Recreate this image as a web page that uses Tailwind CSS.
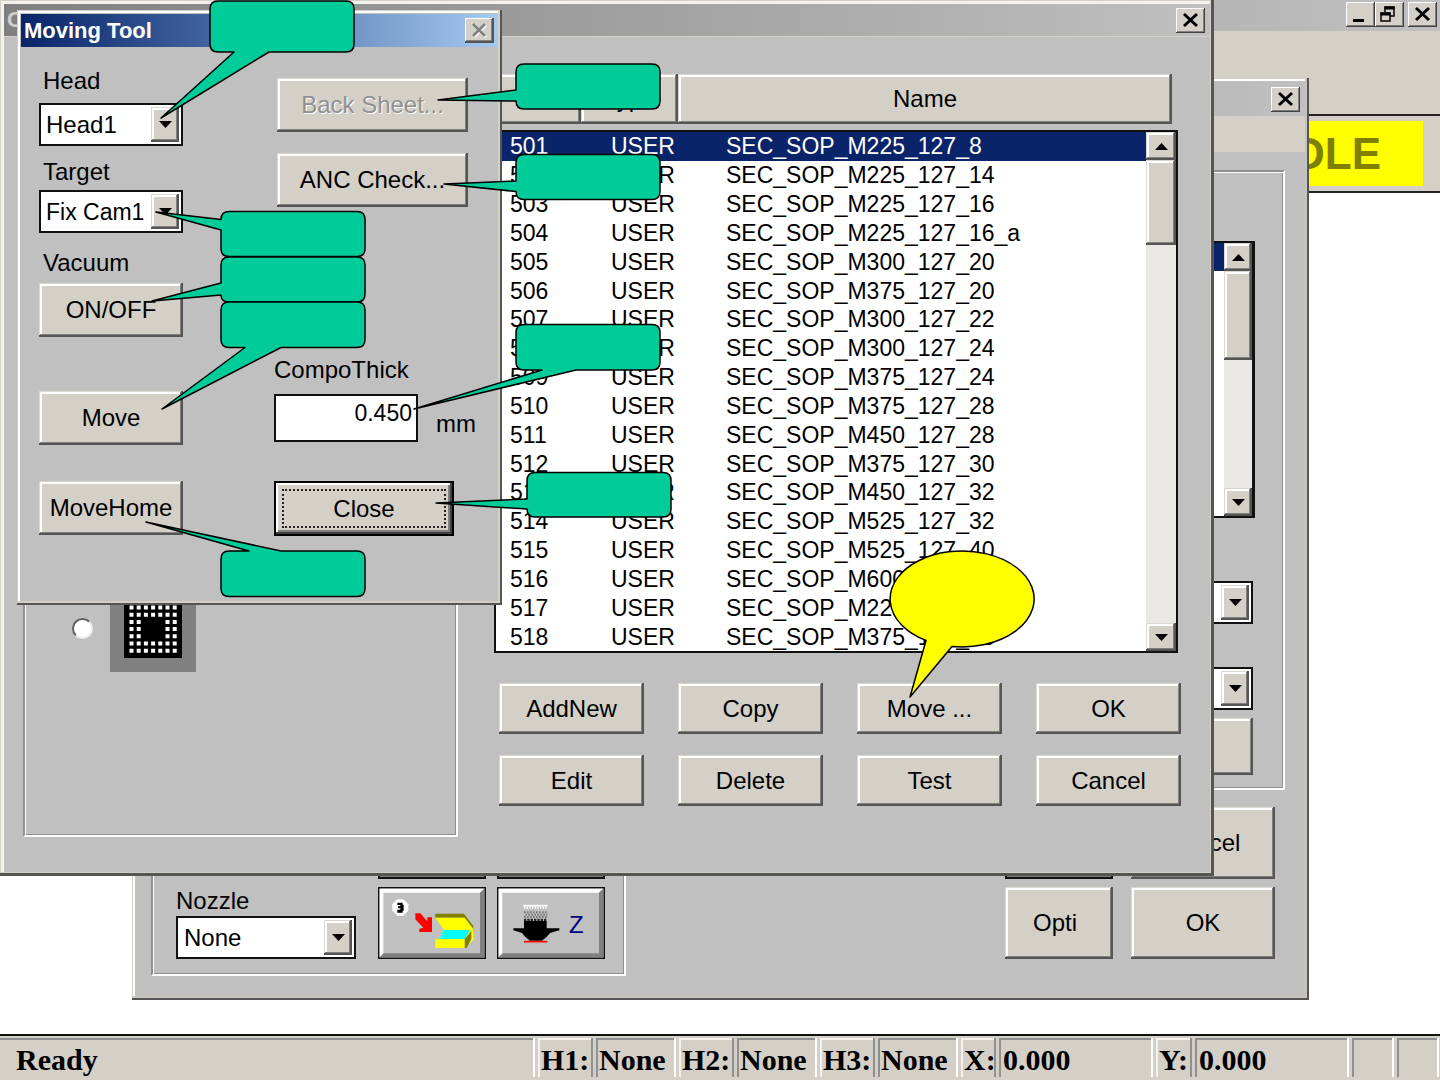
<!DOCTYPE html>
<html lang="en">
<head>
  <meta charset="UTF-8" />
  <meta name="viewport" content="width=device-width, initial-scale=1.0"/>
  <title>Moving Tool</title>
  <script src="https://cdn.jsdelivr.net/npm/@tailwindcss/browser@4"></script>
</head>
<body class="relative min-h-screen flex flex-col overflow-hidden bg-white text-black text-[24px] leading-9 font-['Liberation_Sans',sans-serif]">

<!-- Main application frame -->
<header>
  <div class="h-[31px] pt-[2px] pr-[3px] flex justify-end bg-linear-to-r from-[#808080] to-[#c0c0c0]">
    <button aria-label="Minimize" class="w-[29px] h-[25px] bg-[#d4d0c8] shadow-[inset_-1px_-1px_#404040,inset_1px_1px_#fff,inset_-2px_-2px_#808080]">
      <svg viewBox="0 0 29 25" class="w-full h-full"><rect x="7" y="17" width="11" height="3"/></svg>
    </button>
    <button aria-label="Restore" class="w-[29px] h-[25px] bg-[#d4d0c8] shadow-[inset_-1px_-1px_#404040,inset_1px_1px_#fff,inset_-2px_-2px_#808080]">
      <svg viewBox="0 0 29 25" class="w-full h-full" fill="none" stroke="#000" stroke-width="1.5"><path d="M10 10V5h9v9h-4M6 11h9v8H6z"/><path d="M9.500 6h10M5.500 12h10" stroke-width="3"/></svg>
    </button>
    <button aria-label="Close" class="ml-1 w-[29px] h-[25px] bg-[#d4d0c8] shadow-[inset_-1px_-1px_#404040,inset_1px_1px_#fff,inset_-2px_-2px_#808080]">
      <svg viewBox="0 0 29 25" class="w-full h-full" stroke="#000" stroke-width="3"><path d="M8 6l13 12M21 6L8 18"/></svg>
    </button>
  </div>
  <div class="h-[83px] bg-[#d4d0c8]"></div>
  <div class="h-[79px] py-[5px] pr-[17px] flex justify-end border-y-2 border-[#222] bg-[#d4d0c8]">
    <div class="w-[180px] pr-[42px] flex items-center justify-end bg-[#ffff00] text-[#808000] text-[44px] font-bold">IDLE</div>
  </div>
</header>

<main class="grow">

  <!-- Package window, furthest back -->
  <section class="absolute left-[132px] top-[78px] w-[1177px] h-[922px] p-1 flex flex-col bg-[#c0c0c0] shadow-[inset_-2px_-2px_#555,inset_1px_1px_#d4d0c8,inset_-4px_-4px_#c8c4bc,inset_3px_3px_#fff]">
    <div class="h-[34px] px-[5px] flex items-center justify-end bg-linear-to-r from-[#808080] to-[#c0c0c0]">
      <button aria-label="Close" class="w-[29px] h-[25px] bg-[#d4d0c8] shadow-[inset_-1px_-1px_#404040,inset_1px_1px_#fff,inset_-2px_-2px_#808080]">
        <svg viewBox="0 0 29 25" class="w-full h-full" stroke="#000" stroke-width="3"><path d="M8 6l13 12M21 6L8 18"/></svg>
      </button>
    </div>
    <div class="h-9 bg-[#d4d0c8]"></div>
    <div class="grow flex justify-between pl-[15px] pr-5">
      <fieldset class="self-end mb-5 w-[475px] p-[15px] pl-[23px] pr-[19px] flex items-end gap-[11px] border-2 border-[#909090] border-b-white border-r-white shadow-[inset_1px_1px_#fff,inset_-1px_-1px_#909090]">
        <div class="w-[180px] mr-[11px]">
          <label for="nozzle" class="block leading-[30px]">Nozzle</label>
          <div class="relative">
            <select id="nozzle" class="block appearance-none w-full h-[43px] pl-[6px] bg-white border-2 border-[#111]"><option>None</option></select>
            <span class="absolute right-1 inset-y-1 w-7 flex items-center justify-center pointer-events-none bg-[#d4d0c8] shadow-[inset_-2px_-2px_#555,inset_1px_1px_#dcd8d0,inset_-3px_-3px_#808080,inset_3px_3px_#fff]"><svg viewBox="0 0 13 7" class="w-[13px]"><path d="M0 0h13L6.500 7z"/></svg></span>
          </div>
        </div>
        <div class="grid grid-cols-2 gap-x-[11px] gap-y-2">
          <button aria-label="Tool one" class="w-[108px] h-[72px] border-2 border-[#111] shadow-[inset_-5px_-5px_#808080,inset_3px_3px_#fff]"></button>
          <button aria-label="Tool two" class="w-[108px] h-[72px] border-2 border-[#111] shadow-[inset_-5px_-5px_#808080,inset_3px_3px_#fff]"></button>
          <button aria-label="Send to feeder" class="w-[108px] h-[72px]">
            <svg viewBox="24 51 324 216" class="w-full h-full">
              <path d="M26 53h320v212H26z" fill="#c0c0c0" stroke="#111" stroke-width="5"/>
              <path d="M29 56h314l-14 12H40v182l-11 12z" fill="#fff"/>
              <path d="M343 56v206H29l12-12h289V68z" fill="#808080"/>
              <path d="M82 88h18l15 15v19l-15 15H82l-15-15v-19z" fill="#fff"/>
              <path d="M82 98h16v6h3v18h-3v6H82v-9h9v-4h-7v-6h7v-4h-9z"/>
              <path d="M136 130h15l21 24v-12h14v44h-38v-10l12-3-24-25z" fill="#f00"/>
              <path d="M196 131h86l28 37v14l-28-39h-86z" fill="#808000"/>
              <path d="M196 143h88l26 34v33l-26 24h-88v-27h12l14-27z" fill="#ff0"/>
              <path d="M222 180h78l-16 27h-76z" fill="#0ff"/>
              <path d="M284 207l20-24v24l-14 27h-6z" fill="#808000"/>
            </svg>
          </button>
          <button aria-label="Nozzle Z" class="w-[108px] h-[72px]">
            <svg viewBox="381 51 324 216" class="w-full h-full">
              <path d="M383 53h320v212H383z" fill="#c0c0c0" stroke="#111" stroke-width="5"/>
              <path d="M386 56h314l-14 12H397v182l-11 12z" fill="#fff"/>
              <path d="M700 56v206H386l12-12h289V68z" fill="#808080"/>
              <path d="M460 107h73" stroke="#fff" stroke-width="5"/>
              <path d="M462 113h70" stroke="#fff" stroke-width="7" stroke-dasharray="4 4"/>
              <path d="M462 127h70M466 134h66M462 141h70" stroke="#777" stroke-width="6" stroke-dasharray="5 4"/>
              <path d="M462 150h70" stroke="#222" stroke-width="8" stroke-dasharray="7 3"/>
              <path d="M462 153h68v22h38v6l-28 8-10 12-14 11h-36l-14-11-10-12-26-8v-6h32z"/>
              <path d="M462 215h70" stroke="#f00" stroke-width="5"/>
              <text x="597" y="190" font-size="72" fill="#000080">Z</text>
            </svg>
          </button>
        </div>
      </fieldset>

      <div class="w-[560px] pt-[18px] pb-[37px] flex flex-col">
        <fieldset class="h-[620px] pt-[69px] pr-[30px] flex flex-col items-end border-2 border-[#909090] border-b-white border-r-white shadow-[inset_1px_1px_#fff,inset_-1px_-1px_#909090]">
          <div class="-mr-[2px] w-[300px] h-[277px] flex justify-end bg-white border-2 border-r-[3px] border-[#111]">
            <div class="grow h-7 bg-[#0a246a]"></div>
            <div class="w-7 flex flex-col bg-[#eae8e4]">
              <button aria-label="Scroll up" class="h-7 flex items-center justify-center bg-[#d4d0c8] shadow-[inset_-2px_-2px_#555,inset_1px_1px_#dcd8d0,inset_-3px_-3px_#808080,inset_3px_3px_#fff]"><svg viewBox="0 0 13 7" class="w-[13px]"><path d="M0 7h13L6.500 0z"/></svg></button>
              <div class="h-[89px] bg-[#d4d0c8] shadow-[inset_-2px_-2px_#555,inset_1px_1px_#dcd8d0,inset_-3px_-3px_#808080,inset_3px_3px_#fff]"></div>
              <button aria-label="Scroll down" class="mt-auto h-7 flex items-center justify-center bg-[#d4d0c8] shadow-[inset_-2px_-2px_#555,inset_1px_1px_#dcd8d0,inset_-3px_-3px_#808080,inset_3px_3px_#fff]"><svg viewBox="0 0 13 7" class="w-[13px]"><path d="M0 0h13L6.500 7z"/></svg></button>
            </div>
          </div>
          <div class="relative mt-[63px] w-[180px]">
            <select aria-label="Feeder" class="block appearance-none w-full h-[43px] bg-white border-2 border-[#111]"></select>
            <span class="absolute right-1 inset-y-1 w-7 flex items-center justify-center pointer-events-none bg-[#d4d0c8] shadow-[inset_-2px_-2px_#555,inset_1px_1px_#dcd8d0,inset_-3px_-3px_#808080,inset_3px_3px_#fff]"><svg viewBox="0 0 13 7" class="w-[13px]"><path d="M0 0h13L6.500 7z"/></svg></span>
          </div>
          <div class="relative mt-[43px] w-[180px]">
            <select aria-label="Camera" class="block appearance-none w-full h-[43px] bg-white border-2 border-[#111]"></select>
            <span class="absolute right-1 inset-y-1 w-7 flex items-center justify-center pointer-events-none bg-[#d4d0c8] shadow-[inset_-2px_-2px_#555,inset_1px_1px_#dcd8d0,inset_-3px_-3px_#808080,inset_3px_3px_#fff]"><svg viewBox="0 0 13 7" class="w-[13px]"><path d="M0 0h13L6.500 7z"/></svg></span>
          </div>
          <button aria-label="Package" class="mt-2 w-[180px] h-[57px] bg-[#d4d0c8] shadow-[inset_-2px_-2px_#555,inset_1px_1px_#dcd8d0,inset_-3px_-3px_#808080,inset_3px_3px_#fff]"></button>
        </fieldset>
        <div class="mt-auto mr-[10px] grid grid-cols-[108px_144px] justify-end gap-x-[18px] gap-y-2">
          <button aria-label="Align" class="h-[72px] border-2 border-[#111] shadow-[inset_-5px_-5px_#808080,inset_3px_3px_#fff]"></button>
          <button class="h-[72px] bg-[#d4d0c8] shadow-[inset_-2px_-2px_#555,inset_1px_1px_#dcd8d0,inset_-3px_-3px_#808080,inset_3px_3px_#fff]">Cancel</button>
          <button class="h-[72px] pr-2 bg-[#d4d0c8] shadow-[inset_-2px_-2px_#555,inset_1px_1px_#dcd8d0,inset_-3px_-3px_#808080,inset_3px_3px_#fff]">Opti</button>
          <button class="h-[72px] bg-[#d4d0c8] shadow-[inset_-2px_-2px_#555,inset_1px_1px_#dcd8d0,inset_-3px_-3px_#808080,inset_3px_3px_#fff]">OK</button>
        </div>
      </div>
    </div>
  </section>

  <!-- Component list window -->
  <section class="absolute left-0 top-0 w-[1214px] h-[876px] p-1 flex flex-col bg-[#c0c0c0] shadow-[inset_-3px_-3px_#555,inset_1px_1px_#d4d0c8,inset_-4px_-4px_#d4d0c8,inset_4px_4px_#f4f2ee]">
    <div class="h-[33px] pl-[3px] pr-[5px] flex items-center justify-between border-b border-[#d4d0c8] bg-linear-to-r from-[#808080] to-[#c0c0c0]">
      <h2 class="text-[22px] font-bold text-[#d4d0c8]">C</h2>
      <button aria-label="Close" class="w-[29px] h-[25px] bg-[#d4d0c8] shadow-[inset_-1px_-1px_#404040,inset_1px_1px_#fff,inset_-2px_-2px_#808080]">
        <svg viewBox="0 0 29 25" class="w-full h-full" stroke="#000" stroke-width="3"><path d="M8 6l13 12M21 6L8 18"/></svg>
      </button>
    </div>
    <div class="grow flex pl-[19px]">
      <fieldset class="mb-[35px] w-[435px] h-[300px] self-end pt-[47px] pl-[47px] flex items-start border-2 border-[#909090] border-b-white border-r-white shadow-[inset_1px_1px_#fff,inset_-1px_-1px_#909090]">
        <input id="bga" type="radio" name="package" class="appearance-none mt-[32px] size-[21px] rounded-full bg-white border-2 border-[#606060] border-r-[#eee] border-b-[#eee]" />
        <label for="bga" aria-label="BGA" class="ml-[17px]">
          <svg viewBox="0 0 86 86" class="size-[86px]">
            <path d="M0 0h86v86H0z" fill="#808080"/>
            <path d="M14 14h58v58H14z"/>
            <g stroke="#fff" stroke-width="4" stroke-dasharray="4 3.200">
              <path d="M19.500 21.500h48M19.500 28.700h48M19.500 57.500h48M19.500 64.700h48M19.500 35.900h12M19.500 43.100h12M19.500 50.300h12M55.500 35.900h12M55.500 43.100h12M55.500 50.300h12"/>
            </g>
          </svg>
        </label>
      </fieldset>
      <div class="ml-9 w-[684px] pt-[37px]">
        <div class="flex h-[50px] pr-[6px]">
          <button class="w-[87px] bg-[#d4d0c8] shadow-[inset_-2px_-2px_#555,inset_1px_1px_#dcd8d0,inset_-3px_-3px_#808080,inset_3px_3px_#fff]">No</button>
          <button class="w-[97px] bg-[#d4d0c8] shadow-[inset_-2px_-2px_#555,inset_1px_1px_#dcd8d0,inset_-3px_-3px_#808080,inset_3px_3px_#fff]">Type</button>
          <button class="grow bg-[#d4d0c8] shadow-[inset_-2px_-2px_#555,inset_1px_1px_#dcd8d0,inset_-3px_-3px_#808080,inset_3px_3px_#fff]">Name</button>
        </div>
        <div class="mt-[6px] h-[523px] flex bg-white border-2 border-[#111]">
          <table class="grow h-full border-collapse text-[23px] leading-7"><tbody id="components"></tbody></table>
          <div class="w-[30px] flex flex-col bg-[#eae8e4]">
            <button aria-label="Scroll up" class="h-7 flex items-center justify-center bg-[#d4d0c8] shadow-[inset_-2px_-2px_#555,inset_1px_1px_#dcd8d0,inset_-3px_-3px_#808080,inset_3px_3px_#fff]"><svg viewBox="0 0 13 7" class="w-[13px]"><path d="M0 7h13L6.500 0z"/></svg></button>
            <div class="h-[85px] bg-[#d4d0c8] shadow-[inset_-2px_-2px_#555,inset_1px_1px_#dcd8d0,inset_-3px_-3px_#808080,inset_3px_3px_#fff]"></div>
            <button aria-label="Scroll down" class="mt-auto h-7 flex items-center justify-center bg-[#d4d0c8] shadow-[inset_-2px_-2px_#555,inset_1px_1px_#dcd8d0,inset_-3px_-3px_#808080,inset_3px_3px_#fff]"><svg viewBox="0 0 13 7" class="w-[13px]"><path d="M0 0h13L6.500 7z"/></svg></button>
          </div>
        </div>
        <div id="actions" class="mt-[30px] ml-[5px] -mr-[3px] grid grid-cols-4 gap-x-[34px] gap-y-[21px]"></div>
      </div>
    </div>
  </section>

  <!-- Moving Tool dialog -->
  <section class="absolute left-[17px] top-[10px] w-[485px] h-[595px] p-1 flex flex-col bg-[#c0c0c0] shadow-[inset_-2px_-2px_#555,inset_1px_1px_#d4d0c8,inset_-4px_-4px_#d4d0c8,inset_3px_3px_#fff]">
    <div class="h-[33px] pl-[3px] pr-1 flex items-center justify-between bg-linear-to-r from-[#0a246a] to-[#a6caf0]">
      <h1 class="text-[22px] font-bold text-white">Moving Tool</h1>
      <button aria-label="Close" class="w-[29px] h-[25px] bg-[#d4d0c8] shadow-[inset_-2px_-2px_#555,inset_1px_1px_#fff,inset_-3px_-3px_#808080]">
        <svg viewBox="0 0 29 25" class="w-full h-full" stroke-width="2.500"><path d="M9 7l12 12M21 7L9 19" stroke="#fff"/><path d="M8 6l12 12M20 6L8 18" stroke="#808080"/></svg>
      </button>
    </div>
    <div class="flex pl-[18px]">
      <div class="w-[144px] pt-4 flex flex-col">
        <label for="head" class="pl-1 mb-1">Head</label>
        <div class="relative">
          <select id="head" class="block appearance-none w-full h-[43px] pl-[5px] bg-white border-2 border-[#111]"><option>Head1</option></select>
          <span class="absolute right-1 inset-y-1 w-7 flex items-center justify-center pointer-events-none bg-[#d4d0c8] shadow-[inset_-2px_-2px_#555,inset_1px_1px_#dcd8d0,inset_-3px_-3px_#808080,inset_3px_3px_#fff]"><svg viewBox="0 0 13 7" class="w-[13px]"><path d="M0 0h13L6.500 7z"/></svg></span>
        </div>
        <label for="target" class="pl-1 mt-2">Target</label>
        <div class="relative">
          <select id="target" class="block appearance-none w-full h-[43px] pl-[5px] text-[23px] bg-white border-2 border-[#111]"><option>Fix Cam1</option></select>
          <span class="absolute right-1 inset-y-1 w-7 flex items-center justify-center pointer-events-none bg-[#d4d0c8] shadow-[inset_-2px_-2px_#555,inset_1px_1px_#dcd8d0,inset_-3px_-3px_#808080,inset_3px_3px_#fff]"><svg viewBox="0 0 13 7" class="w-[13px]"><path d="M0 0h13L6.500 7z"/></svg></span>
        </div>
        <label for="vacuum" class="pl-1 mt-3 mb-[2px]">Vacuum</label>
        <button id="vacuum" class="h-[54px] bg-[#d4d0c8] shadow-[inset_-2px_-2px_#555,inset_1px_1px_#dcd8d0,inset_-3px_-3px_#808080,inset_3px_3px_#fff]">ON/OFF</button>
        <button class="mt-[54px] h-[54px] bg-[#d4d0c8] shadow-[inset_-2px_-2px_#555,inset_1px_1px_#dcd8d0,inset_-3px_-3px_#808080,inset_3px_3px_#fff]">Move</button>
        <button class="mt-9 h-[54px] bg-[#d4d0c8] shadow-[inset_-2px_-2px_#555,inset_1px_1px_#dcd8d0,inset_-3px_-3px_#808080,inset_3px_3px_#fff]">MoveHome</button>
      </div>
      <div class="ml-[91px] pt-[31px] flex flex-col items-start">
        <button disabled class="ml-[3px] w-[191px] h-[54px] text-[#909090] text-shadow-[1px_1px_#fff] bg-[#d4d0c8] shadow-[inset_-2px_-2px_#555,inset_1px_1px_#dcd8d0,inset_-3px_-3px_#808080,inset_3px_3px_#fff]">Back Sheet...</button>
        <button class="ml-[3px] mt-[21px] w-[191px] h-[54px] bg-[#d4d0c8] shadow-[inset_-2px_-2px_#555,inset_1px_1px_#dcd8d0,inset_-3px_-3px_#808080,inset_3px_3px_#fff]">ANC Check...</button>
        <label for="thick" class="mt-[145px] mb-[6px]">CompoThick</label>
        <div class="flex items-end gap-[18px]">
          <input id="thick" type="text" value="0.450" class="w-[144px] h-12 pr-1 pb-[9px] text-right text-[23px] bg-white border-2 border-[#111]" />
          <span>mm</span>
        </div>
        <button class="mt-[39px] w-[180px] h-[55px] p-[6px] bg-[#d4d0c8] border-2 border-black shadow-[inset_-2px_-2px_#404040,inset_2px_2px_#fff,inset_-4px_-4px_#808080]"><span class="flex h-full items-center justify-center border-2 border-dotted border-[#222]">Close</span></button>
      </div>
    </div>
  </section>

  <!-- Callouts over the windows -->
  <svg viewBox="0 0 1440 1080" class="absolute left-0 top-0 w-[1440px] h-[1080px] pointer-events-none" fill="#00cc99" stroke="#000" stroke-width="1.500" stroke-linejoin="round">
    <path d="M218 1h128q8 0 8 8v35q0 8-8 8h-77L161 118l73-66h-16q-8 0-8-8V9q0-8 8-8z"/>
    <path d="M524 64h128q8 0 8 8v29q0 8-8 8H524q-8 0-8-8l-78-1 78-10V72q0-8 8-8z"/>
    <path d="M524 154.500h128q8 0 8 8v29q0 8-8 8H524q-8 0-8-8l-72-7.500 72-3v-18.500q0-8 8-8z"/>
    <path d="M229 211.500h128q8 0 8 8v29q0 8-8 8H229q-8 0-8-8V230l-65-18 65 7.500q0-8 8-8z"/>
    <path d="M229 257h128q8 0 8 8v29q0 8-8 8H229q-8 0-8-7l-69 6 69-18v-18q0-8 8-8z"/>
    <path d="M229 302h128q8 0 8 8v29.500q0 8-8 8h-76L162 409l83-61.500h-16q-8 0-8-8V310q0-8 8-8z"/>
    <path d="M524 324.500h128q8 0 8 8V362q0 8-8 8h-76l-162 39 128-39h-18q-8 0-8-8v-29.500q0-8 8-8z"/>
    <path d="M535 472.500h128q8 0 8 8v28.500q0 8-8 8H535q-8 0-8-8l-91-6 91-4v-18.500q0-8 8-8z"/>
    <path d="M229 551h20l-103-29 135 29h76q8 0 8 8v29.500q0 8-8 8H229q-8 0-8-8V559q0-8 8-8z"/>
    <path d="M926 640.500L910 697l42-50.500A72 48 0 1 0 926 640.500z" fill="#ffff00"/>
  </svg>
</main>

<!-- Status bar -->
<footer class="h-[46px] pt-[2px] pb-[3px] pr-[1px] flex gap-[3px] border-t-2 border-[#111] bg-[#d4d0c8] font-['Liberation_Serif',serif] text-[30px] leading-[44px] font-bold whitespace-pre">
  <div class="grow pl-[16px] shadow-[inset_-2px_0_#fff,inset_0_2px_#909090]">Ready</div>
  <div class="w-[55px] pl-[3px] shadow-[inset_-2px_0_#909090,inset_2px_2px_#f4f2ee]">H1:</div>
  <div class="w-20 pl-[3px] shadow-[inset_-2px_0_#fff,inset_2px_2px_#909090]">None</div>
  <div class="w-[55px] pl-[3px] shadow-[inset_-2px_0_#909090,inset_2px_2px_#f4f2ee]">H2:</div>
  <div class="w-20 pl-[3px] shadow-[inset_-2px_0_#fff,inset_2px_2px_#909090]">None</div>
  <div class="w-[55px] pl-[3px] shadow-[inset_-2px_0_#909090,inset_2px_2px_#f4f2ee]">H3:</div>
  <div class="w-20 pl-[3px] shadow-[inset_-2px_0_#fff,inset_2px_2px_#909090]">None</div>
  <div class="w-[35px] pl-[3px] shadow-[inset_-2px_0_#909090,inset_2px_2px_#f4f2ee]">X:</div>
  <div class="w-[154px] pl-1 shadow-[inset_-2px_0_#fff,inset_2px_2px_#909090]">0.000</div>
  <div class="w-9 pl-[3px] shadow-[inset_-2px_0_#909090,inset_2px_2px_#f4f2ee]">Y:</div>
  <div class="w-[154px] pl-1 shadow-[inset_-2px_0_#fff,inset_2px_2px_#909090]">0.000</div>
  <div class="w-[42px] shadow-[inset_-2px_0_#fff,inset_2px_2px_#909090]"></div>
  <div class="w-[42px] shadow-[inset_-2px_0_#fff,inset_2px_2px_#909090]"></div>
</footer>

<script>
  const names = [
    'M225_127_8', 'M225_127_14', 'M225_127_16', 'M225_127_16_a', 'M300_127_20', 'M375_127_20',
    'M300_127_22', 'M300_127_24', 'M375_127_24', 'M375_127_28', 'M450_127_28', 'M375_127_30',
    'M450_127_32', 'M525_127_32', 'M525_127_40', 'M600_127_48', 'M225_150_8', 'M375_127_28'
  ];

  document.getElementById('components').innerHTML = names.map((name, i) => `
    <tr class="${i === 0 ? 'bg-[#0a246a] text-white' : ''}">
      <td class="w-[115px] p-0 pl-[14px]">${501 + i}</td>
      <td class="w-[115px] p-0">USER</td>
      <td class="p-0">SEC_SOP_${name}</td>
    </tr>`).join('');

  const actions = ['AddNew', 'Copy', 'Move ...', 'OK', 'Edit', 'Delete', 'Test', 'Cancel'];
  document.getElementById('actions').innerHTML = actions.map(text => `
    <button class="h-[51px] bg-[#d4d0c8] shadow-[inset_-2px_-2px_#555,inset_1px_1px_#dcd8d0,inset_-3px_-3px_#808080,inset_3px_3px_#fff]">${text}</button>`).join('');
</script>
</body>
</html>
